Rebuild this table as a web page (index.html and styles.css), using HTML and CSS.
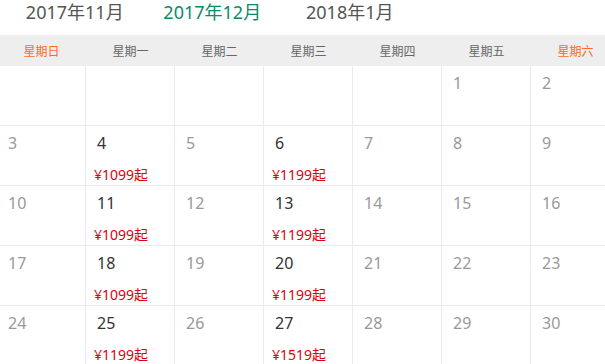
FILE: index.html
```html
<!DOCTYPE html>
<html lang="zh-CN">
<head>
<meta charset="utf-8">
<link rel="stylesheet" href="styles.css">
</head>
<body>
<div class="months">
  <div class="month">2017年11月</div>
  <div class="month active">2017年12月</div>
  <div class="month">2018年1月</div>
</div>
<div class="weekbar">
  <div class="week weekend">星期日</div>
  <div class="week">星期一</div>
  <div class="week">星期二</div>
  <div class="week">星期三</div>
  <div class="week">星期四</div>
  <div class="week">星期五</div>
  <div class="week weekend">星期六</div>
</div>
<div class="grid">
  <div class="cell"></div>
  <div class="cell"></div>
  <div class="cell"></div>
  <div class="cell"></div>
  <div class="cell"></div>
  <div class="cell"><span class="day">1</span></div>
  <div class="cell"><span class="day">2</span></div>

  <div class="cell"><span class="day">3</span></div>
  <div class="cell has"><span class="day">4</span><span class="price">¥1099起</span></div>
  <div class="cell"><span class="day">5</span></div>
  <div class="cell has"><span class="day">6</span><span class="price">¥1199起</span></div>
  <div class="cell"><span class="day">7</span></div>
  <div class="cell"><span class="day">8</span></div>
  <div class="cell"><span class="day">9</span></div>

  <div class="cell"><span class="day">10</span></div>
  <div class="cell has"><span class="day">11</span><span class="price">¥1099起</span></div>
  <div class="cell"><span class="day">12</span></div>
  <div class="cell has"><span class="day">13</span><span class="price">¥1199起</span></div>
  <div class="cell"><span class="day">14</span></div>
  <div class="cell"><span class="day">15</span></div>
  <div class="cell"><span class="day">16</span></div>

  <div class="cell"><span class="day">17</span></div>
  <div class="cell has"><span class="day">18</span><span class="price">¥1099起</span></div>
  <div class="cell"><span class="day">19</span></div>
  <div class="cell has"><span class="day">20</span><span class="price">¥1199起</span></div>
  <div class="cell"><span class="day">21</span></div>
  <div class="cell"><span class="day">22</span></div>
  <div class="cell"><span class="day">23</span></div>

  <div class="cell"><span class="day">24</span></div>
  <div class="cell has"><span class="day">25</span><span class="price">¥1199起</span></div>
  <div class="cell"><span class="day">26</span></div>
  <div class="cell has"><span class="day">27</span><span class="price">¥1519起</span></div>
  <div class="cell"><span class="day">28</span></div>
  <div class="cell"><span class="day">29</span></div>
  <div class="cell"><span class="day">30</span></div>
</div>
</body>
</html>
```

FILE: styles.css
```css
html, body {
  margin: 0;
  padding: 0;
  background: #fff;
  overflow: hidden;
}
body {
  font-family: "Noto Sans", "Noto Sans CJK SC", sans-serif;
  width: 605px;
  height: 364px;
}
.months {
  display: flex;
  height: 35px;
  padding-left: 6px;
}
.month {
  width: 137.5px;
  text-align: center;
  font-size: 18px;
  line-height: 24px;
  color: #555;
}
.month.active {
  color: #0a8a68;
}
.weekbar {
  display: grid;
  grid-template-columns: repeat(7, 89px);
  margin-left: -3px;
  width: 623px;
  height: 31px;
  background: #eeeeee;
  align-items: center;
}
.week {
  text-align: center;
  font-size: 12px;
  color: #666;
  font-family: "Noto Sans CJK SC", sans-serif;
}
.week.weekend {
  color: #ff6a22;
}
.grid {
  display: grid;
  grid-template-columns: repeat(7, 89px);
  grid-auto-rows: 60px;
  margin-left: -3px;
  width: 623px;
}
.cell {
  box-sizing: border-box;
  border-right: 1px solid #ebebeb;
  border-bottom: 1px solid #ebebeb;
  display: flex;
  flex-direction: column;
  justify-content: space-between;
  padding: 6px 0 1px 0;
}
.day {
  font-size: 16px;
  line-height: 22px;
  padding-left: 11px;
  color: #999;
}
.cell.has .day {
  color: #333;
}
.price {
  font-size: 14px;
  line-height: 19px;
  padding-left: 8px;
  color: #dd0011;
  font-family: "Noto Sans", "Noto Sans CJK SC", sans-serif;
}
```
